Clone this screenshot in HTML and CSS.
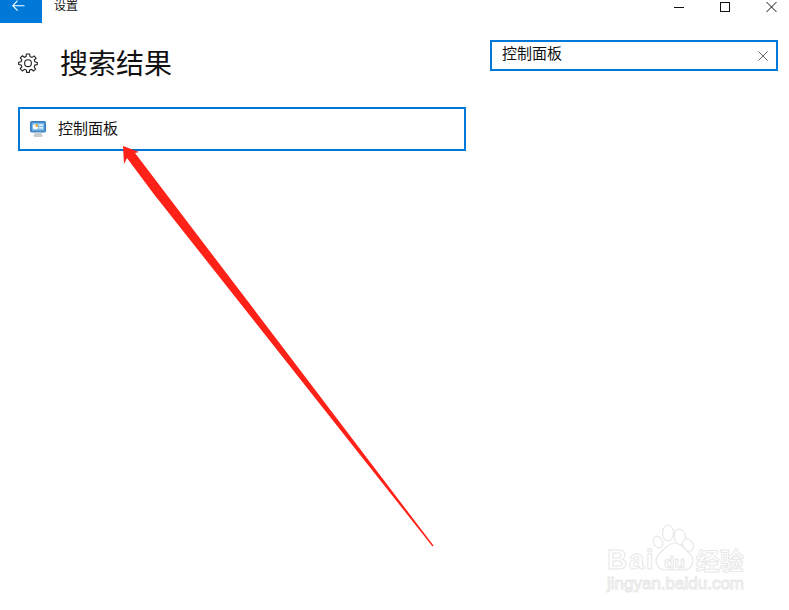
FILE: index.html
```html
<!DOCTYPE html>
<html lang="zh-CN">
<head>
    <meta charset="UTF-8">
    <title>设置</title>
    <link rel="stylesheet" href="styles.css">
</head>
<body>
    <div class="titlebar">
        <div class="back-btn">
            <svg width="13" height="12" viewBox="0 0 13 12"><path d="M5.6 0.7 L0.8 5.7 L5.6 10.7 M0.8 5.7 H12.5" fill="none" stroke="#fff" stroke-width="1.1"/></svg>
        </div>
        <span class="app-title">设置</span>
        <div class="win-controls">
            <svg class="win-icon" width="46" height="14" viewBox="0 0 46 14"><path d="M0 7.5 H10" stroke="#111" fill="none"/></svg>
            <svg class="win-icon" width="46" height="14" viewBox="0 0 46 14"><rect x="0.5" y="2.5" width="9" height="9" stroke="#111" fill="none"/></svg>
            <svg class="win-icon" width="11" height="14" viewBox="0 0 11 14"><path d="M0.5 2 L10.5 12 M10.5 2 L0.5 12" stroke="#111" fill="none"/></svg>
        </div>
    </div>

    <div class="content">
        <div class="results">
            <div class="heading">
                <svg class="gear" width="20" height="20" viewBox="0 0 20 20">
                    <path d="M8.4 1 H11.6 L12.1 3.6 L14 4.4 L16.2 2.9 L18.1 5.2 L16.3 7 L16.9 8.9 L19.3 9.4 V11.6 L16.9 12.1 L16.2 14 L17.6 16.2 L15.4 18 L13.6 16.4 L11.7 17 L11.3 19.4 H8.7 L8.2 17 L6.4 16.3 L4.4 17.9 L2.2 15.8 L3.8 13.8 L3.1 12 L0.7 11.5 V9.2 L3.1 8.7 L3.8 6.9 L2.3 4.9 L4.4 2.8 L6.4 4.3 L8.1 3.6 Z" fill="none" stroke="#222" stroke-width="1.1"/>
                    <circle cx="10" cy="10.2" r="3.4" fill="none" stroke="#222" stroke-width="1.1"/>
                </svg>
                <h1>搜索结果</h1>
            </div>
            <div class="result-item">
                <svg class="cp-icon" width="16" height="16" viewBox="0 0 16 16">
                    <rect x="0.5" y="0.5" width="15" height="10.5" rx="1" fill="#4a90d0" stroke="#3a7fc0"/>
                    <rect x="2" y="2" width="12" height="7.5" fill="#7fbbe8"/>
                    <circle cx="5.5" cy="5.7" r="2.6" fill="#fff"/>
                    <path d="M5.5 5.7 V3.1 A2.6 2.6 0 0 1 8.1 5.7 Z" fill="#e8a020"/>
                    <path d="M9 4.2 H13 M9 6.8 H13" stroke="#fff" stroke-width="1.2"/>
                    <path d="M5 11.5 H11 L12.5 14.5 Q12.5 16 11 16 H5 Q3.5 16 3.5 14.5 Z" fill="#c9cdd0"/>
                </svg>
                <span class="result-label">控制面板</span>
            </div>
        </div>
        <div class="search-box">
            <span class="search-text">控制面板</span>
            <svg width="10" height="10" viewBox="0 0 10 10"><path d="M0.5 0.5 L9.5 9.5 M9.5 0.5 L0.5 9.5" stroke="#666" fill="none"/></svg>
        </div>
    </div>

    <!-- annotation arrow painted over the page -->
    <svg class="arrow" width="789" height="610" viewBox="0 0 789 610">
        <path d="M123 146 L139 152 L135 153 L433.5 545.5 L432.5 546.5 L153 193 L127 158 L124 164 Z" fill="#fe2117"/>
    </svg>

    <div class="watermark">
        <svg class="paw" width="50" height="50" viewBox="0 0 50 50">
            <g fill="#fff" stroke="#e8e8e8" stroke-width="1.2">
                <ellipse cx="8" cy="18" rx="4.5" ry="6" transform="rotate(-25 8 18)"/>
                <ellipse cx="18" cy="9" rx="5.5" ry="8"/>
                <ellipse cx="30" cy="13" rx="5.5" ry="8" transform="rotate(-12 30 13)"/>
                <ellipse cx="38" cy="21" rx="5" ry="6.5" transform="rotate(-35 38 21)"/>
                <path d="M25 19 C31 19 34 25 39 29 C46 35 43 46 33 46 C28 46 22 45 16 46 C6 46 3 35 10 29 C15 25 18 19 25 19 Z"/>
            </g>
        </svg>
        <div class="wm-top"><span class="wm-bai">Bai</span><span class="wm-du">du</span><span class="wm-cn">经验</span></div>
        <div class="wm-url">jingyan.baidu.com</div>
    </div>
</body>
</html>
```
FILE: styles.css
```css
/* Page */
body {
    margin: 0;
    width: 789px;
    height: 610px;
    overflow: hidden;
    position: relative;
    background-color: #ffffff;
    color: #111;
    font-family: "Liberation Sans", "Noto Sans CJK SC", sans-serif;
}

/* Title bar */
.titlebar {
    display: flex;
    align-items: flex-start;
    height: 23px;
}

.back-btn {
    box-sizing: border-box;
    width: 42px;
    height: 23px;
    padding-left: 12px;
    background-color: #0078d7;
}

.back-btn svg {
    display: block;
}

.app-title {
    margin-left: 12px;
    font-size: 12px;
    line-height: 13px;
}

.win-controls {
    margin-left: auto;
    display: flex;
    padding-right: 12px;
}

/* Content */
.content {
    display: flex;
    justify-content: space-between;
    padding: 17px 11px 0 18px;
}

.results {
    width: 448px;
}

.heading {
    display: flex;
    align-items: center;
    height: 46px;
}

.heading h1 {
    margin: 4px 0 0 22px;
    font-size: 28px;
    font-weight: 400;
    line-height: 40px;
}

.result-item {
    box-sizing: border-box;
    height: 44px;
    margin-top: 21px;
    border: 2px solid #0078d7;
    display: flex;
    align-items: center;
    padding-left: 10px;
    font-size: 15px;
}

.result-label {
    padding-bottom: 4px;
}

.cp-icon {
    margin-right: 12px;
}

.search-box {
    box-sizing: border-box;
    width: 288px;
    height: 31px;
    border: 2px solid #0078d7;
    display: flex;
    align-items: center;
    justify-content: space-between;
    padding: 0 8px 0 10px;
    font-size: 15px;
}

.search-text {
    padding-bottom: 6px;
}

/* Overlays */
.arrow {
    position: absolute;
    left: 0;
    top: 0;
}

.watermark {
    position: absolute;
    left: 604px;
    top: 524px;
    width: 160px;
    height: 70px;
    color: #fff;
    -webkit-text-stroke: 1px #e8e8e8;
}

.paw {
    position: absolute;
    left: 46px;
    top: 0;
}

.wm-top {
    position: absolute;
    top: 18px;
    left: 3px;
    display: flex;
    align-items: center;
    white-space: nowrap;
}

.wm-bai {
    font-size: 28px;
    font-weight: 700;
    letter-spacing: 1.5px;
}

.wm-du {
    margin-left: 9px;
    font-size: 17px;
    font-weight: 700;
    padding-top: 6px;
}

.wm-cn {
    margin-left: 11px;
    font-size: 24px;
    font-weight: 700;
}

.wm-url {
    position: absolute;
    top: 50px;
    left: 3px;
    font-size: 17px;
    white-space: nowrap;
}
```
